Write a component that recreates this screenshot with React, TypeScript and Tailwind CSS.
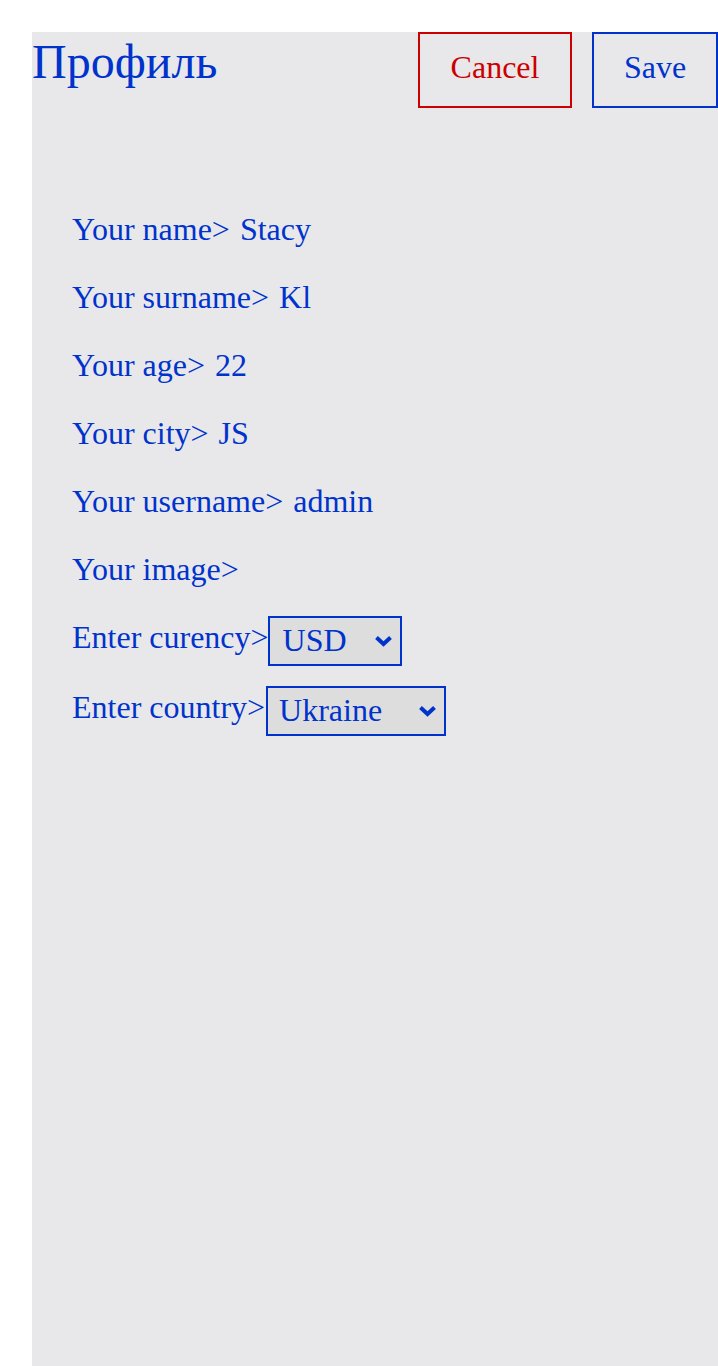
const rows = [
  { label: "Your name>", value: "Stacy" },
  { label: "Your surname>", value: "Kl" },
  { label: "Your age>", value: "22" },
  { label: "Your city>", value: "JS" },
  { label: "Your username>", value: "admin" },
  { label: "Your image>", value: "" },
];

function Chevron() {
  return (
    <svg
      className="absolute right-[9px] top-1/2 -translate-y-1/2 pointer-events-none"
      width="19"
      height="12"
      viewBox="0 0 19 12"
    >
      <polyline points="2.5,2.5 9.5,9 16.5,2.5" fill="none" stroke="#0033cc" strokeWidth="4" strokeLinejoin="miter" />
    </svg>
  );
}

function Select({ className, options }: { className: string; options: string[] }) {
  return (
    <div className="relative">
      <select className={`${className} h-[50px] border-2 border-[#0033cc] bg-[#dddddd] pb-[2px] text-[32px] appearance-none block`}>
        {options.map((o) => (
          <option key={o}>{o}</option>
        ))}
      </select>
      <Chevron />
    </div>
  );
}

export default function App() {
  return (
    <div className="bg-white min-h-screen pt-[32px] pl-[32px] font-['Liberation_Serif',serif] text-[#0033cc]">
      <div className="bg-[#e8e8eb] h-[1334px]">
        {/* Шапка */}
        <div className="flex justify-between items-start">
          <h1 className="text-[48px] leading-[55px] mt-[2px]">Профиль</h1>
          <div className="flex gap-[20px]">
            <button className="h-[76px] w-[154px] pb-[6px] border-2 border-[#cc0000] text-[#cc0000] text-[32px]">
              Cancel
            </button>
            <button className="h-[76px] w-[126px] pb-[6px] border-2 border-[#0033cc] text-[32px]">
              Save
            </button>
          </div>
        </div>

        {/* Поля */}
        <div className="pl-[40px] pt-[103px] flex flex-col text-[32px] leading-[37px]">
          {rows.map((r) => (
            <div key={r.label} className="h-[68px] flex gap-[10px]">
              <span>{r.label}</span>
              {r.value && <span>{r.value}</span>}
            </div>
          ))}
          <div className="flex items-start h-[70px] -mt-[3px]">
            <span className="mt-[3px] -mr-[1px]">Enter curency&gt;</span>
            <Select className="w-[134px] pl-[13px]" options={["USD", "EUR"]} />
          </div>
          <div className="flex items-start">
            <span className="mt-[3px] mr-[1px]">Enter country&gt;</span>
            <Select className="w-[180px] pl-[11px]" options={["Ukraine", "Poland"]} />
          </div>
        </div>
      </div>
    </div>
  );
}
